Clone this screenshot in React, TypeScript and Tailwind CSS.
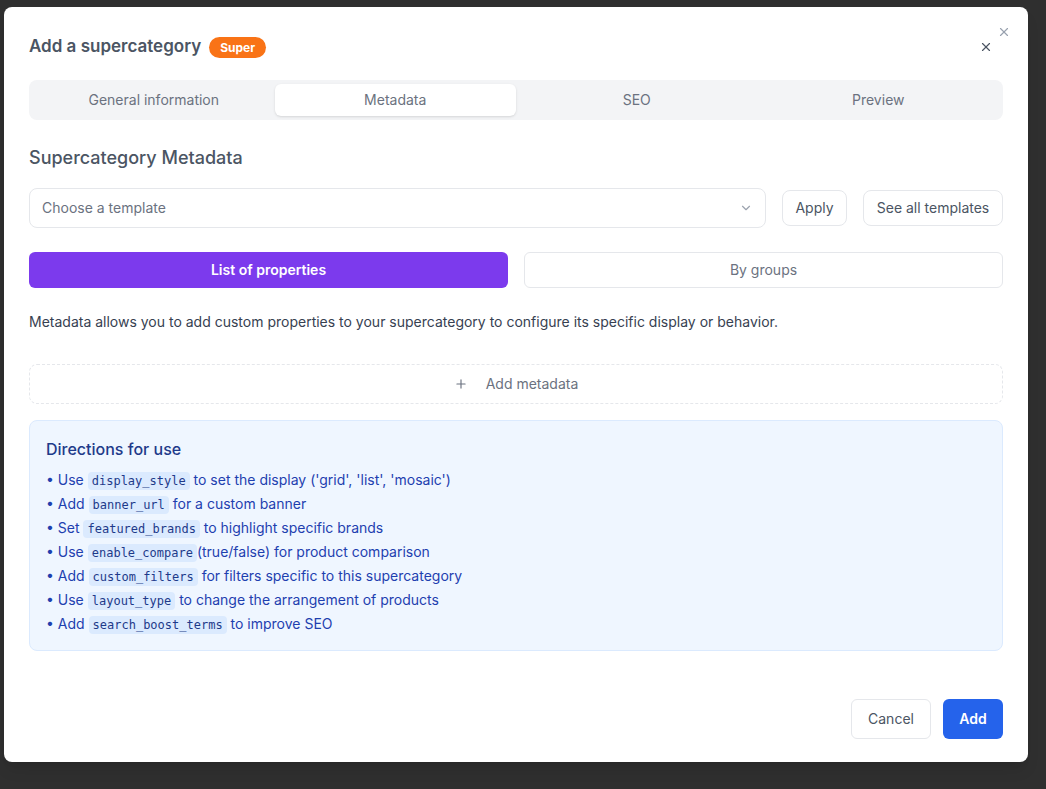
import React from "react";

const X = ({ size }: { size: number }) => (
  <svg width={size} height={size} viewBox="0 0 24 24" fill="none" stroke="currentColor" strokeWidth={2} strokeLinecap="round">
    <path d="M18 6 6 18" />
    <path d="m6 6 12 12" />
  </svg>
);

const Code = ({ children }: { children: React.ReactNode }) => (
  <code className="rounded bg-[#dbeafe] px-1 py-[2px] text-[12px] leading-none text-[#1e3a8a]" style={{ fontFamily: '"DejaVu Sans Mono", "Liberation Mono", monospace' }}>
    {children}
  </code>
);

export default function App() {
  const tabs = ["General information", "Metadata", "SEO", "Preview"];
  return (
    <div className="min-h-[789px] w-[1046px] bg-[#2f2f2f] pt-[7px] pl-[4px]" style={{ fontFamily: 'Inter, "Noto Sans", sans-serif' }}>
      <div className="relative w-[1024px] h-[755px] rounded-lg bg-white px-[25px] pt-[26px] pb-6 shadow-lg">
        <button className="absolute right-[17px] top-[18px] text-gray-400">
          <X size={14} />
        </button>
        <div className="flex h-7 items-center justify-between">
          <div className="flex items-center gap-2">
            <h2 className="text-[17px] font-semibold text-[#4b5563]">Add a supercategory</h2>
            <span className="rounded-full bg-[#f97316] px-[11px] py-[2px] text-[12px] font-bold text-white leading-[17px]">Super</span>
          </div>
          <button className="mr-[10px] text-[#4b5563]">
            <X size={14} />
          </button>
        </div>

        <div className="mt-[19px] grid h-10 grid-cols-4 rounded-lg bg-[#f3f4f6] p-1">
          {tabs.map((t) => (
            <div
              key={t}
              className={
                "flex items-center justify-center rounded-md text-sm font-normal text-[#6b7280] " +
                (t === "Metadata" ? "bg-white shadow-sm" : "")
              }
            >
              {t}
            </div>
          ))}
        </div>

        <h3 className="mt-6 text-[18px] leading-7 font-medium text-[#4b5563]">Supercategory Metadata</h3>

        <div className="mt-4 flex items-center gap-4">
          <div className="flex h-10 flex-1 items-center justify-between rounded-lg border border-[#e5e7eb] px-3">
            <span className="text-sm text-[#6b7280]">Choose a template</span>
            <svg width="14" height="14" viewBox="0 0 24 24" fill="none" stroke="#9ca3af" strokeWidth={2} strokeLinecap="round" strokeLinejoin="round">
              <path d="m6 9 6 6 6-6" />
            </svg>
          </div>
          <button className="h-9 w-[65px] rounded-lg border border-[#e5e7eb] text-sm font-normal text-[#4b5563]">Apply</button>
          <button className="h-9 w-[140px] rounded-lg border border-[#e5e7eb] text-sm font-normal text-[#4b5563]">See all templates</button>
        </div>

        <div className="mt-6 grid grid-cols-2 gap-4">
          <button className="h-9 rounded-md bg-[#7c3aed] text-sm font-semibold text-white">List of properties</button>
          <button className="h-9 rounded-md border border-[#e5e7eb] text-sm font-normal text-[#6b7280]">By groups</button>
        </div>

        <p className="mt-6 text-sm leading-5 text-[#374151]">
          Metadata allows you to add custom properties to your supercategory to configure its specific display or behavior.
        </p>

        <button className="mt-8 flex h-10 w-full items-center justify-center gap-[18px] rounded-lg border border-dashed border-[#e5e7eb] text-sm font-normal text-[#6b7280]">
          <svg width="14" height="14" viewBox="0 0 24 24" fill="none" stroke="currentColor" strokeWidth={2} strokeLinecap="round">
            <path d="M5 12h14" />
            <path d="M12 5v14" />
          </svg>
          Add metadata
        </button>

        <div className="mt-4 rounded-lg border border-[#dbeafe] bg-[#eff6ff] px-4 pt-4 pb-[14px]">
          <h4 className="text-base leading-6 font-medium text-[#1e3a8a]">Directions for use</h4>
          <ul className="mt-[7px] text-sm leading-6 text-[#1e40af]">
            <li>• Use <Code>display_style</Code> to set the display ('grid', 'list', 'mosaic')</li>
            <li>• Add <Code>banner_url</Code> for a custom banner</li>
            <li>• Set <Code>featured_brands</Code> to highlight specific brands</li>
            <li>• Use <Code>enable_compare</Code>(true/false) for product comparison</li>
            <li>• Add <Code>custom_filters</Code> for filters specific to this supercategory</li>
            <li>• Use <Code>layout_type</Code> to change the arrangement of products</li>
            <li>• Add <Code>search_boost_terms</Code> to improve SEO</li>
          </ul>
        </div>

        <div className="mt-12 flex justify-end gap-3">
          <button className="h-10 w-20 rounded-md border border-[#e5e7eb] text-sm font-normal text-[#4b5563]">Cancel</button>
          <button className="h-10 w-[60px] rounded-md bg-[#2563eb] text-sm font-semibold text-white">Add</button>
        </div>
      </div>
    </div>
  );
}
